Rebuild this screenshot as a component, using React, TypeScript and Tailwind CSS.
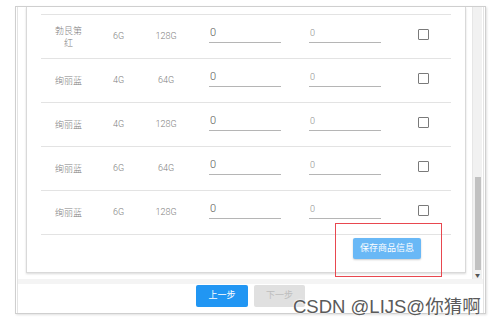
import React from "react";

const rows = [
  { color: "勃艮第红", ram: "6G", rom: "128G" },
  { color: "绚丽蓝", ram: "4G", rom: "64G" },
  { color: "绚丽蓝", ram: "4G", rom: "128G" },
  { color: "绚丽蓝", ram: "6G", rom: "64G" },
  { color: "绚丽蓝", ram: "6G", rom: "128G" },
];

function Row({ color, ram, rom }: { color: string; ram: string; rom: string }) {
  return (
    <div className="flex items-center h-[44px] border-t border-[#e3e3e3] text-[9px] text-[#808080] font-light">
      <div className="w-[55px] text-center leading-[12px] px-[12px]">{color}</div>
      <div className="w-[45px] text-center">{ram}</div>
      <div className="w-[50px] text-center">{rom}</div>
      <div className="w-[18px]" />
      <div className="w-[72px] h-[18px] mb-[5px] border-b border-[#b5b5b5] text-[11px] text-[#555] font-light leading-[16px] pl-px">0</div>
      <div className="w-[28px]" />
      <div className="w-[72px] h-[18px] mb-[5px] border-b border-[#b5b5b5] text-[9px] text-[#8a8a8a] font-light leading-[16px] pl-px">0</div>
      <div className="w-[37px]" />
      <div className="w-[11px] h-[11px] mb-[4px] border-[1.5px] border-[#7a7a7a] rounded-[1px] bg-white" />
    </div>
  );
}

export default function App() {
  return (
    <div className="relative w-[496px] h-[327px] bg-white overflow-hidden font-[Roboto,'Noto_Sans_CJK_SC',sans-serif]">
      <div className="ml-[15px] mt-[6px] w-[471px] h-[308px] border border-[#cfcfcf] shadow-[1px_1px_2px_rgba(0,0,0,0.12)] px-px">
        <div className="h-full border-x border-[#e4e4e4] flex flex-col">
          <div className="flex h-[272px]">
            <div className="flex-1 pl-[8px] overflow-hidden">
              <div className="h-[266px] w-[440px] bg-white border-x border-b border-[#d9d9d9] shadow-[0_1px_2px_rgba(0,0,0,0.15)] px-[14px] pt-[7px]">
                {rows.map((r, i) => (
                  <Row key={i} {...r} />
                ))}
                <div className="border-t border-[#e3e3e3] h-[37px] pt-[3px] flex justify-end pr-[30px]">
                  <button className="w-[68px] h-[21px] bg-[#69b8f6] text-white text-[9px] rounded-[2px] shadow-[0_1px_2px_rgba(0,0,0,0.2)]">
                    保存商品信息
                  </button>
                </div>
              </div>
            </div>
            <div className="w-[10px] bg-[#f1f1f1] border-l border-[#e6e6e6] flex flex-col items-center mr-px">
              <div className="w-[6px] h-[93px] mt-[170px] bg-[#c1c1c1]" />
              <div className="mt-auto mb-[1px] text-[5px] leading-[6px] text-[#555]">▼</div>
            </div>
          </div>
          <div className="flex-1 flex flex-col">
            <div className="h-[5px] bg-[#f4f4f4]" />
            <div className="flex justify-center gap-[6px] pt-[1px]">
              <button className="w-[52px] h-[22px] bg-[#2196f3] text-white text-[9px] rounded-[2px]">上一步</button>
              <button className="w-[51px] h-[22px] bg-[#e0e0e0] text-[#bdbdbd] text-[9px] rounded-[2px]">下一步</button>
            </div>
          </div>
        </div>
      </div>
      <div className="absolute left-[335px] top-[223px] w-[107px] h-[54px] border border-[#e8474f]" />
      <div className="absolute left-[293px] top-[296px] text-[18.5px] leading-[22px] text-[#5a5a5a] font-['Liberation_Sans','Noto_Sans_CJK_SC',sans-serif] [text-shadow:0_0_2px_#fff,0_0_2px_#fff]">
        CSDN @LIJS@你猜啊
      </div>
    </div>
  );
}
